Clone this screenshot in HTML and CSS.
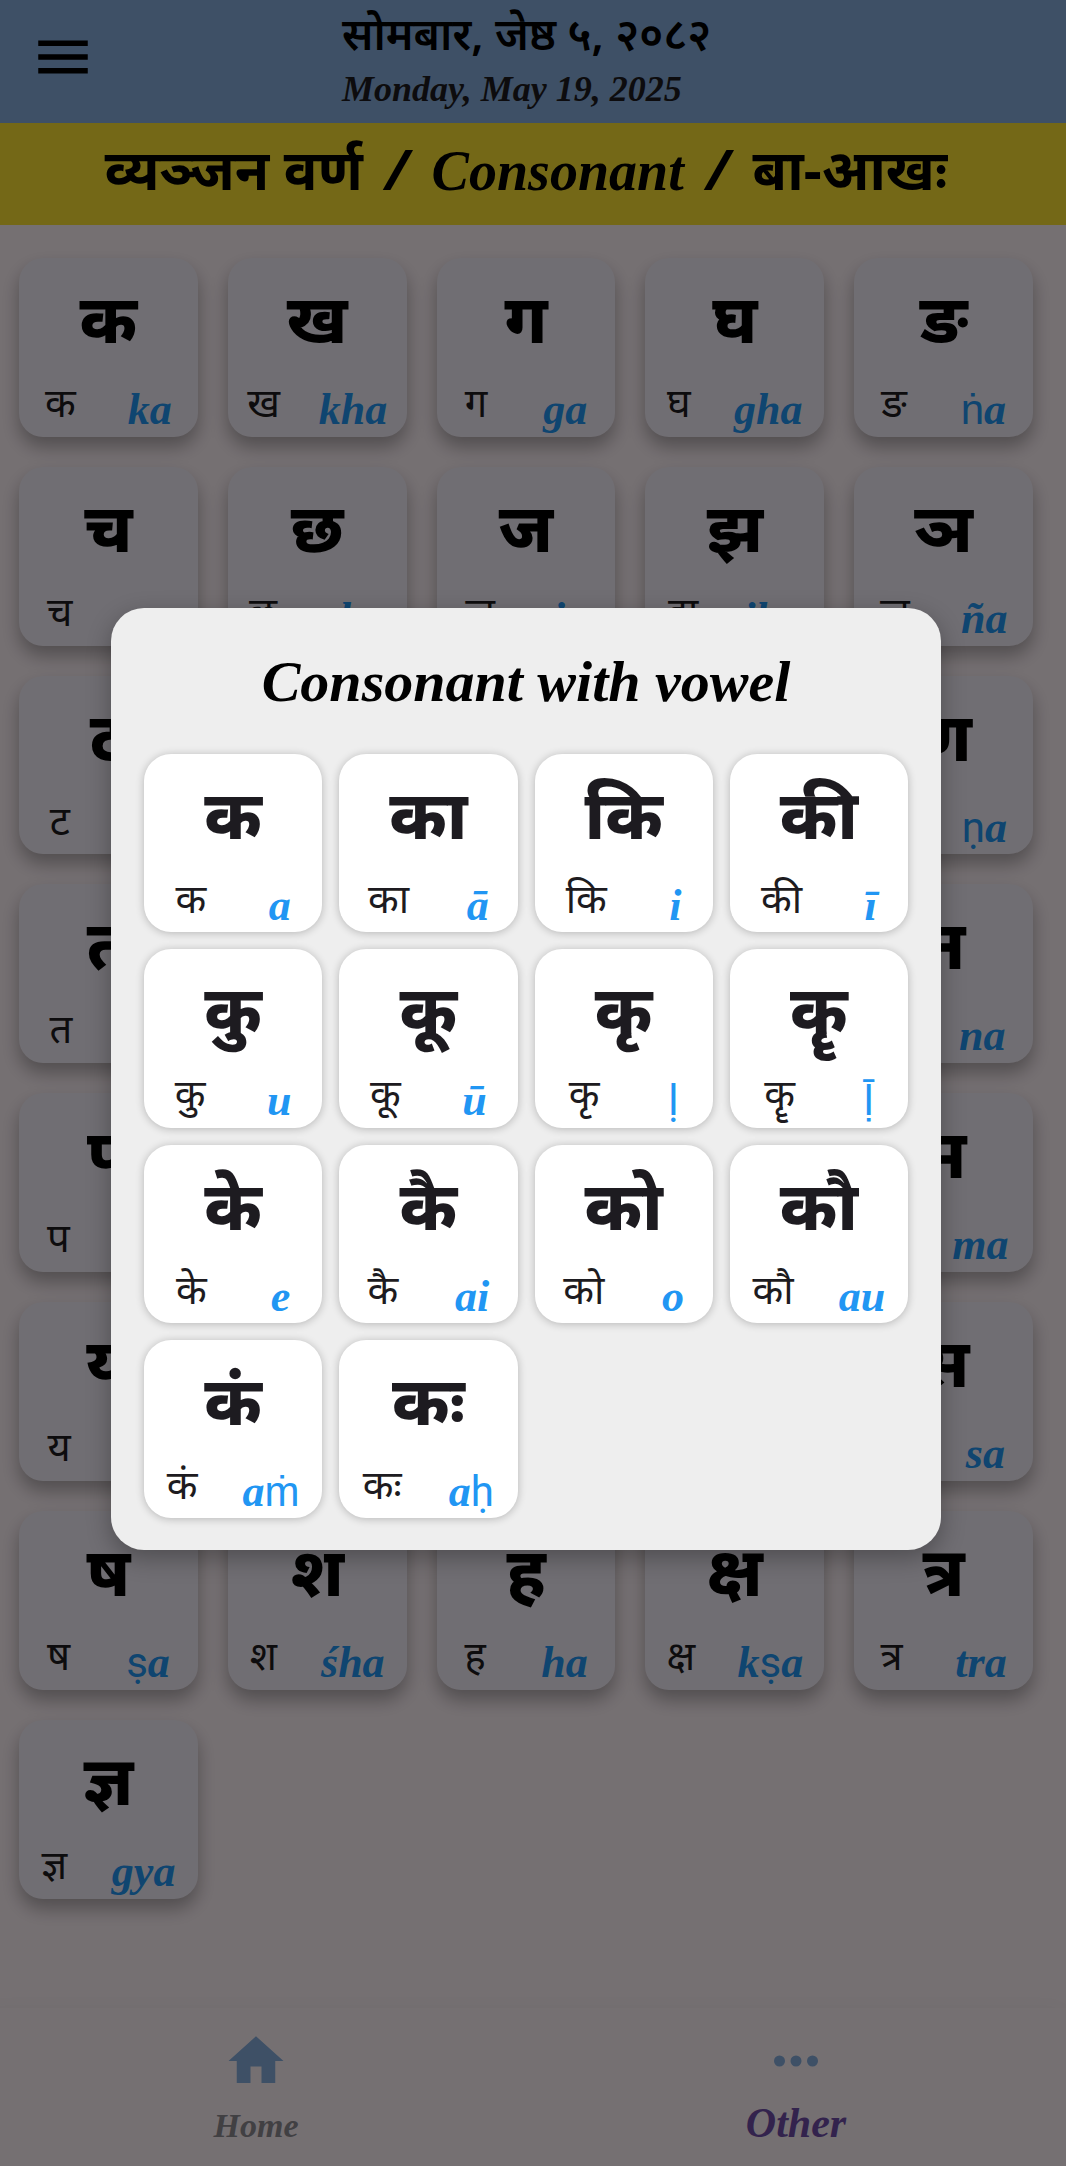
FILE: index.html
```html
<!DOCTYPE html>
<html lang="hi">
<head>
<meta charset="utf-8">
<meta name="viewport" content="width=device-width, initial-scale=1">
<title>Consonant</title>
<link rel="stylesheet" href="styles.css">
</head>
<body>
<div class="app">
  <header class="topbar">
    <button class="menu" aria-label="Menu"><svg viewBox="0 0 24 24" aria-hidden="true"><path d="M3 18h18v-2H3v2zm0-5h18v-2H3v2zm0-7v2h18V6H3z"/></svg></button>
    <div class="dates">
      <p class="date-ne">सोमबार, जेष्ठ ५, २०८२</p>
      <p class="date-en">Monday, May 19, 2025</p>
    </div>
  </header>
  <h1 class="banner">व्यञ्जन वर्ण <i>/</i> <em>Consonant</em> <i>/</i> बा-आखः</h1>
  <main class="letters">
    <button class="card"><b>क</b><span class="row"><span>क</span><i>ka</i></span></button>
    <button class="card"><b>ख</b><span class="row"><span>ख</span><i>kha</i></span></button>
    <button class="card"><b>ग</b><span class="row"><span>ग</span><i>ga</i></span></button>
    <button class="card"><b>घ</b><span class="row"><span>घ</span><i>gha</i></span></button>
    <button class="card"><b>ङ</b><span class="row"><span>ङ</span><i><u>ṅ</u>a</i></span></button>
    <button class="card"><b>च</b><span class="row"><span>च</span><i>ca</i></span></button>
    <button class="card"><b>छ</b><span class="row"><span>छ</span><i>cha</i></span></button>
    <button class="card"><b>ज</b><span class="row"><span>ज</span><i>ja</i></span></button>
    <button class="card"><b>झ</b><span class="row"><span>झ</span><i>jha</i></span></button>
    <button class="card"><b>ञ</b><span class="row"><span>ञ</span><i>ña</i></span></button>
    <button class="card"><b>ट</b><span class="row"><span>ट</span><i><u>ṭ</u>a</i></span></button>
    <button class="card"><b>ठ</b><span class="row"><span>ठ</span><i><u>ṭ</u>ha</i></span></button>
    <button class="card"><b>ड</b><span class="row"><span>ड</span><i><u>ḍ</u>a</i></span></button>
    <button class="card"><b>ढ</b><span class="row"><span>ढ</span><i><u>ḍ</u>ha</i></span></button>
    <button class="card"><b>ण</b><span class="row"><span>ण</span><i><u>ṇ</u>a</i></span></button>
    <button class="card"><b>त</b><span class="row"><span>त</span><i>ta</i></span></button>
    <button class="card"><b>थ</b><span class="row"><span>थ</span><i>tha</i></span></button>
    <button class="card"><b>द</b><span class="row"><span>द</span><i>da</i></span></button>
    <button class="card"><b>ध</b><span class="row"><span>ध</span><i>dha</i></span></button>
    <button class="card"><b>न</b><span class="row"><span>न</span><i>na</i></span></button>
    <button class="card"><b>प</b><span class="row"><span>प</span><i>pa</i></span></button>
    <button class="card"><b>फ</b><span class="row"><span>फ</span><i>pha</i></span></button>
    <button class="card"><b>ब</b><span class="row"><span>ब</span><i>ba</i></span></button>
    <button class="card"><b>भ</b><span class="row"><span>भ</span><i>bha</i></span></button>
    <button class="card"><b>म</b><span class="row"><span>म</span><i>ma</i></span></button>
    <button class="card"><b>य</b><span class="row"><span>य</span><i>ya</i></span></button>
    <button class="card"><b>र</b><span class="row"><span>र</span><i>ra</i></span></button>
    <button class="card"><b>ल</b><span class="row"><span>ल</span><i>la</i></span></button>
    <button class="card"><b>व</b><span class="row"><span>व</span><i>wa</i></span></button>
    <button class="card"><b>स</b><span class="row"><span>स</span><i>sa</i></span></button>
    <button class="card"><b>ष</b><span class="row"><span>ष</span><i><u>ṣ</u>a</i></span></button>
    <button class="card"><b>श</b><span class="row"><span>श</span><i>śha</i></span></button>
    <button class="card"><b>ह</b><span class="row"><span>ह</span><i>ha</i></span></button>
    <button class="card"><b>क्ष</b><span class="row"><span>क्ष</span><i>k<u>ṣ</u>a</i></span></button>
    <button class="card"><b>त्र</b><span class="row"><span>त्र</span><i>tra</i></span></button>
    <button class="card"><b>ज्ञ</b><span class="row"><span>ज्ञ</span><i>gya</i></span></button>
  </main>
  <nav class="tabs">
    <a href="#home" class="tab"><svg viewBox="0 0 24 24" aria-hidden="true"><path d="M10 20v-6h4v6h5v-8h3L12 3 2 12h3v8z"/></svg><span>Home</span></a>
    <a href="#other" class="tab active"><svg viewBox="0 0 24 24" aria-hidden="true"><circle cx="6" cy="12" r="2"/><circle cx="12" cy="12" r="2"/><circle cx="18" cy="12" r="2"/></svg><span>Other</span></a>
  </nav>
  <div class="scrim">
    <section class="dialog" role="dialog" aria-modal="true" aria-labelledby="dialog-title">
      <h2 id="dialog-title">Consonant with vowel</h2>
      <div class="vowels">
        <button class="card"><b>क</b><span class="row"><span>क</span><i>a</i></span></button>
        <button class="card"><b>का</b><span class="row"><span>का</span><i>ā</i></span></button>
        <button class="card"><b>कि</b><span class="row"><span>कि</span><i>i</i></span></button>
        <button class="card"><b>की</b><span class="row"><span>की</span><i>ī</i></span></button>
        <button class="card"><b>कु</b><span class="row"><span>कु</span><i>u</i></span></button>
        <button class="card"><b>कू</b><span class="row"><span>कू</span><i>ū</i></span></button>
        <button class="card"><b>कृ</b><span class="row"><span>कृ</span><i><u>ḷ</u></i></span></button>
        <button class="card"><b>कॄ</b><span class="row"><span>कॄ</span><i><u>ḹ</u></i></span></button>
        <button class="card"><b>के</b><span class="row"><span>के</span><i>e</i></span></button>
        <button class="card"><b>कै</b><span class="row"><span>कै</span><i>ai</i></span></button>
        <button class="card"><b>को</b><span class="row"><span>को</span><i>o</i></span></button>
        <button class="card"><b>कौ</b><span class="row"><span>कौ</span><i>au</i></span></button>
        <button class="card"><b>कं</b><span class="row"><span>कं</span><i>a<u>ṁ</u></i></span></button>
        <button class="card"><b>कः</b><span class="row"><span>कः</span><i>a<u>ḥ</u></i></span></button>
      </div>
    </section>
  </div>
</div>
</body>
</html>
```
FILE: styles.css
```css
* { box-sizing: border-box; }

body {
  margin: 0;
  background: #fff4f9;
  color: #000;
  font-family: "Noto Sans", "Noto Sans Devanagari", sans-serif;
}

h1, h2, p { margin: 0; }

button {
  border: 0;
  padding: 0;
  background: none;
  color: inherit;
  font: inherit;
}

.app {
  position: relative;
  display: flex;
  flex-direction: column;
  min-height: 100vh;
  margin-left: -14px;
}

.topbar {
  display: flex;
  height: 123px;
  padding-left: 44px;
  background: #87aede;
}

.menu {
  align-self: center;
  width: 66px;
  height: 66px;
  margin-top: -10px;
}

.menu svg { display: block; width: 66px; height: 66px; }

.dates { margin-left: 246px; }

.date-ne {
  height: 66px;
  font-size: 44px;
  font-weight: 600;
  line-height: 66px;
}

.date-en {
  font: italic 700 36px/46px "Liberation Serif", serif;
  color: #1d1b20;
}

.banner {
  height: 102px;
  background: #fde333;
  font-size: 56px;
  font-weight: 700;
  line-height: 90px;
  text-align: center;
}

.banner em { font-family: "Liberation Serif", serif; font-size: 56px; line-height: 60px; }

.banner i { padding: 0 8px; font-style: italic; line-height: 60px; }

.letters {
  display: grid;
  grid-template-columns: repeat(5, 1fr);
  gap: 30px;
  padding: 33px;
}

.card {
  display: flex;
  flex-direction: column;
  aspect-ratio: 1;
  border-radius: 24px;
  background: #f5f0fa;
  box-shadow: 0 10px 18px rgba(0, 0, 0, .3);
}

.card b {
  height: 114px;
  font-size: 68px;
  font-weight: 800;
  line-height: 118px;
  text-align: center;
  align-self: center;
}

.row {
  display: flex;
  justify-content: space-around;
  align-self: stretch;
  height: 60px;
  font-size: 40px;
  line-height: 60px;
  color: #1d1b20;
}

.row i {
  font: italic 700 44px/76px "Liberation Serif", serif;
  color: #2196f3;
}

.row u {
  font: 400 42px/42px Roboto, sans-serif;
  text-decoration: none;
}

.tabs {
  display: grid;
  grid-template-columns: 1fr 1fr;
  height: 158px;
  margin-top: auto;
  padding-top: 20px;
  background: #fff4f9;
  box-shadow: 0 0 24px rgba(0, 0, 0, .04);
}

.tab {
  display: flex;
  flex-direction: column;
  align-items: center;
  gap: 4px;
  color: #8f8c93;
  text-decoration: none;
  font: italic 700 34px/56px "Liberation Serif", serif;
}

.tab svg { width: 66px; height: 66px; fill: #87aede; }

.tab.active { color: #6f4ea8; font-size: 42px; line-height: 50px; }

.scrim {
  position: absolute;
  inset: 0;
  display: flex;
  align-items: center;
  padding: 0 125px 8px;
  background: rgba(0, 0, 0, .54);
}

.dialog {
  flex: 1;
  padding: 32px 33px;
  border-radius: 33px;
  background: #eee;
  box-shadow: 0 8px 24px rgba(0, 0, 0, .3);
}

.dialog h2 {
  height: 114px;
  font: italic 700 58px/84px "Liberation Serif", serif;
  text-align: center;
}

.vowels {
  display: grid;
  grid-template-columns: repeat(4, 1fr);
  gap: 17px;
}

.vowels .card {
  border-radius: 27px;
  background: #fff;
  box-shadow: 0 1px 8px rgba(0, 0, 0, .24);
  color: #1d1b20;
}
```
